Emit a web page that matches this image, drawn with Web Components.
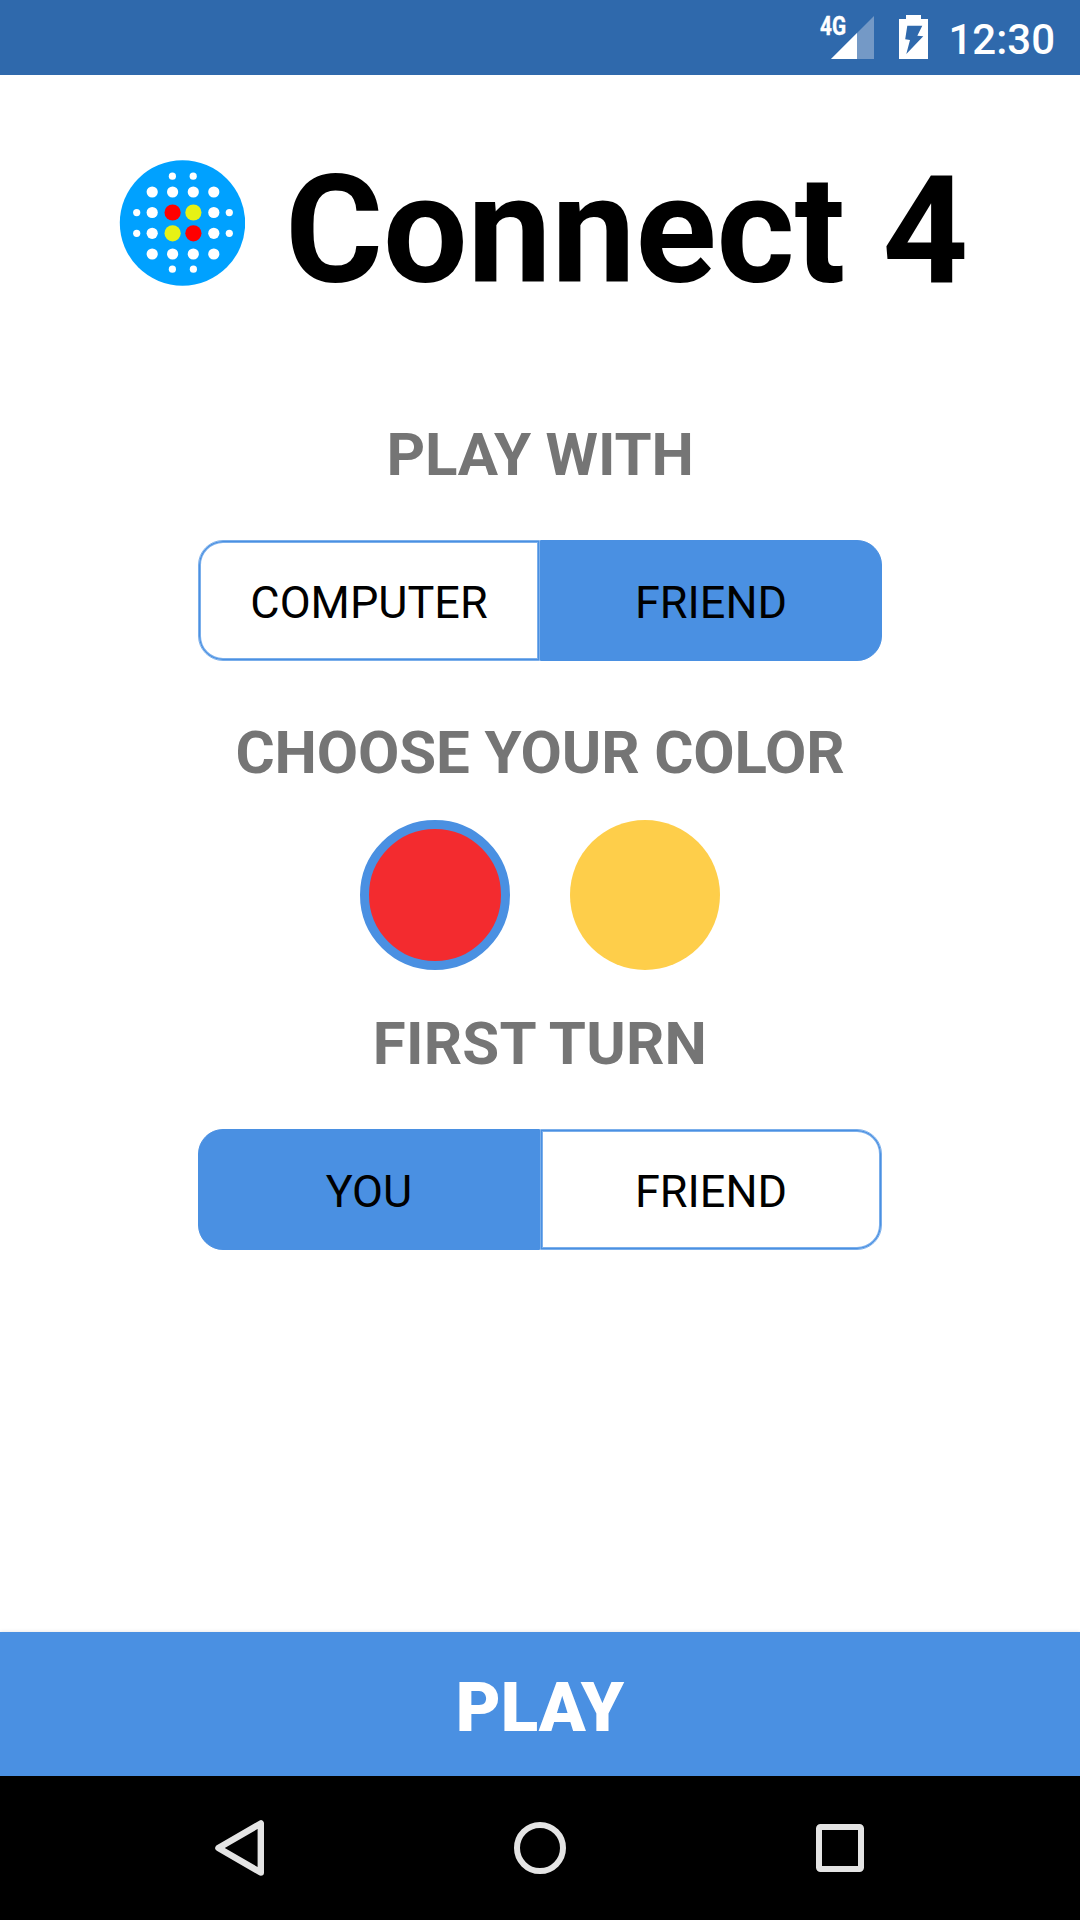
<!DOCTYPE html>
<html lang="en">
<head>
<meta charset="utf-8">
<title>Connect 4</title>
<style>
html,body{margin:0;padding:0;background:#fff}
body{width:1080px;height:1920px;overflow:hidden;font-family:Roboto,sans-serif}
</style>
</head>
<body>
<connect-app></connect-app>
<script>
function define(name, html) {
  const t = document.createElement('template');
  t.innerHTML = html;
  customElements.define(name, class extends HTMLElement {
    constructor() {
      super();
      this.attachShadow({mode: 'open'}).appendChild(t.content.cloneNode(true));
    }
  });
}

define('status-bar', `
<style>
:host{display:flex;box-sizing:border-box;height:75px;background:#2f69ac;color:#fff;justify-content:flex-end;align-items:flex-start;padding-right:25px}
.net{font:700 25px/30px Roboto,sans-serif;width:26px;margin-top:12px;white-space:nowrap}
.net span{display:inline-block;transform:scaleX(.83);transform-origin:0 0;-webkit-text-stroke:.4px #fff}
svg{display:block}
.time{font:500 42px/50px Roboto,sans-serif;margin-top:14.5px;margin-left:18px}
</style>
<div class="net"><span>4G</span></div>
<svg width="84" height="75" viewBox="846 0 84 75" overflow="visible">
<path d="M831 59 L874 16V59Z" fill="#7499c6"/><path d="M831 59 L857 33V59Z" fill="#fff"/>
<path fill="#fff" fill-rule="evenodd" d="M906 15H921V19H928V59H899V19H906ZM907.3 25.7L905.2 39.3L910 40L906.3 54L923.3 36.3L917.3 35.7L922.3 25.7Z"/>
</svg>
<div class="time">12:30</div>`);

define('app-logo', `
<style>:host{display:block;width:126px;height:126px}svg{display:block}</style>
<svg width="126" height="126" viewBox="119 160 126 126">
<circle cx="182.5" cy="223" r="62.7" fill="#00a1ff"/>
<g fill="#fff">
<circle cx="152.2" cy="192" r="5.6"/><circle cx="172.6" cy="192" r="5.6"/><circle cx="193.3" cy="192" r="5.6"/><circle cx="213.8" cy="192" r="5.6"/>
<circle cx="152.2" cy="212.5" r="5.6"/><circle cx="213.8" cy="212.5" r="5.6"/>
<circle cx="152.2" cy="233.3" r="5.6"/><circle cx="213.8" cy="233.3" r="5.6"/>
<circle cx="152.2" cy="254" r="5.6"/><circle cx="172.6" cy="254" r="5.6"/><circle cx="193.3" cy="254" r="5.6"/><circle cx="213.8" cy="254" r="5.6"/>
<circle cx="172.4" cy="176.2" r="3.6"/><circle cx="193.2" cy="176.2" r="3.6"/><circle cx="172.4" cy="269.2" r="3.6"/><circle cx="193.4" cy="269.2" r="3.6"/>
<circle cx="136.7" cy="212.6" r="3.6"/><circle cx="136.7" cy="233.3" r="3.6"/><circle cx="229.3" cy="212.6" r="3.6"/><circle cx="229.3" cy="233.3" r="3.6"/>
</g>
<circle cx="172.6" cy="212.5" r="8.1" fill="#f00"/><circle cx="193.4" cy="233.3" r="8.1" fill="#f00"/>
<circle cx="193.4" cy="212.5" r="8.1" fill="#e6f215"/><circle cx="172.6" cy="233.3" r="8.1" fill="#e6f215"/>
</svg>`);

define('app-title', `
<style>
:host{display:flex;align-items:flex-start;height:176px;padding:68px 0 0 119px;box-sizing:content-box}
app-logo{margin-top:17px}
h1{margin:0 0 0 40px;font:700 150px/176px Roboto,sans-serif;letter-spacing:-.1px;color:#000;white-space:nowrap}
</style>
<app-logo></app-logo><h1><slot></slot></h1>`);

define('section-heading', `
<style>:host{display:block;text-align:center;font:700 60px/70px Roboto,sans-serif;color:#757575;white-space:nowrap}</style>
<slot></slot>`);

define('segment-group', `
<style>:host{display:flex;width:684px;height:121px}::slotted(*){flex:1}</style>
<slot></slot>`);

define('segment-option', `
<style>
:host{display:flex;box-sizing:border-box;align-items:center;justify-content:center;border:1px solid #7bafeb;box-shadow:inset 0 0 0 1px #4a90e2,inset 0 0 0 2px #7bafeb;font:400 45px/53px Roboto,sans-serif;color:#000;background:#fff;padding-top:3px}
:host(:first-child){border-radius:25px 0 0 25px}
:host(:last-child){border-radius:0 25px 25px 0}
:host([selected]){background:#4a90e2;border-color:#4a90e2;box-shadow:none}
</style>
<slot></slot>`);

define('color-disc', `
<style>
:host{display:block;box-sizing:border-box;width:150px;height:150px;border-radius:50%;background:var(--disc)}
:host([selected]){border:9px solid #4a90e2}
</style>`);

define('play-button', `
<style>:host{display:flex;height:144px;align-items:center;justify-content:center;background:#4a90e2;color:#fff;font:900 69px/81px Roboto,sans-serif;box-shadow:0 0 4px rgba(0,0,0,.12);padding-top:6px;box-sizing:border-box}</style>
<slot></slot>`);

define('nav-bar', `
<style>:host{display:flex;height:144px;background:#000;align-items:center;justify-content:center;gap:204px}svg{display:block;fill:none;stroke:#e4e4e4;stroke-width:6}</style>
<svg width="96" height="96" viewBox="192 1800 96 96"><path stroke-width="6.4" stroke-linejoin="round" d="M260.8 1823.4V1872.6L218.4 1848Z"/></svg>
<svg width="96" height="96" viewBox="492 1800 96 96"><circle cx="540" cy="1848" r="23"/></svg>
<svg width="96" height="96" viewBox="792 1800 96 96"><rect x="819" y="1827" width="42" height="42" rx="1.5"/></svg>`);

define('connect-app', `
<style>
:host{display:flex;flex-direction:column;width:1080px;height:1920px;background:#fff}
main{flex:1;display:flex;flex-direction:column;align-items:center;min-height:0}
app-title{align-self:stretch;margin-bottom:101px}
.discs{display:flex;gap:60px}
</style>
<status-bar></status-bar>
<main>
<app-title>Connect 4</app-title>
<section-heading style="margin-bottom:50px;letter-spacing:-.2px">PLAY WITH</section-heading>
<segment-group><segment-option>COMPUTER</segment-option><segment-option selected>FRIEND</segment-option></segment-group>
<section-heading style="margin:57px 0 32px;letter-spacing:-.15px">CHOOSE YOUR COLOR</section-heading>
<div class="discs"><color-disc selected style="--disc:#f32b2f"></color-disc><color-disc style="--disc:#fece4a"></color-disc></div>
<section-heading style="margin:39px 0 50px;letter-spacing:.2px">FIRST TURN</section-heading>
<segment-group><segment-option selected>YOU</segment-option><segment-option>FRIEND</segment-option></segment-group>
</main>
<play-button>PLAY</play-button>
<nav-bar></nav-bar>`);
</script>
</body>
</html>
